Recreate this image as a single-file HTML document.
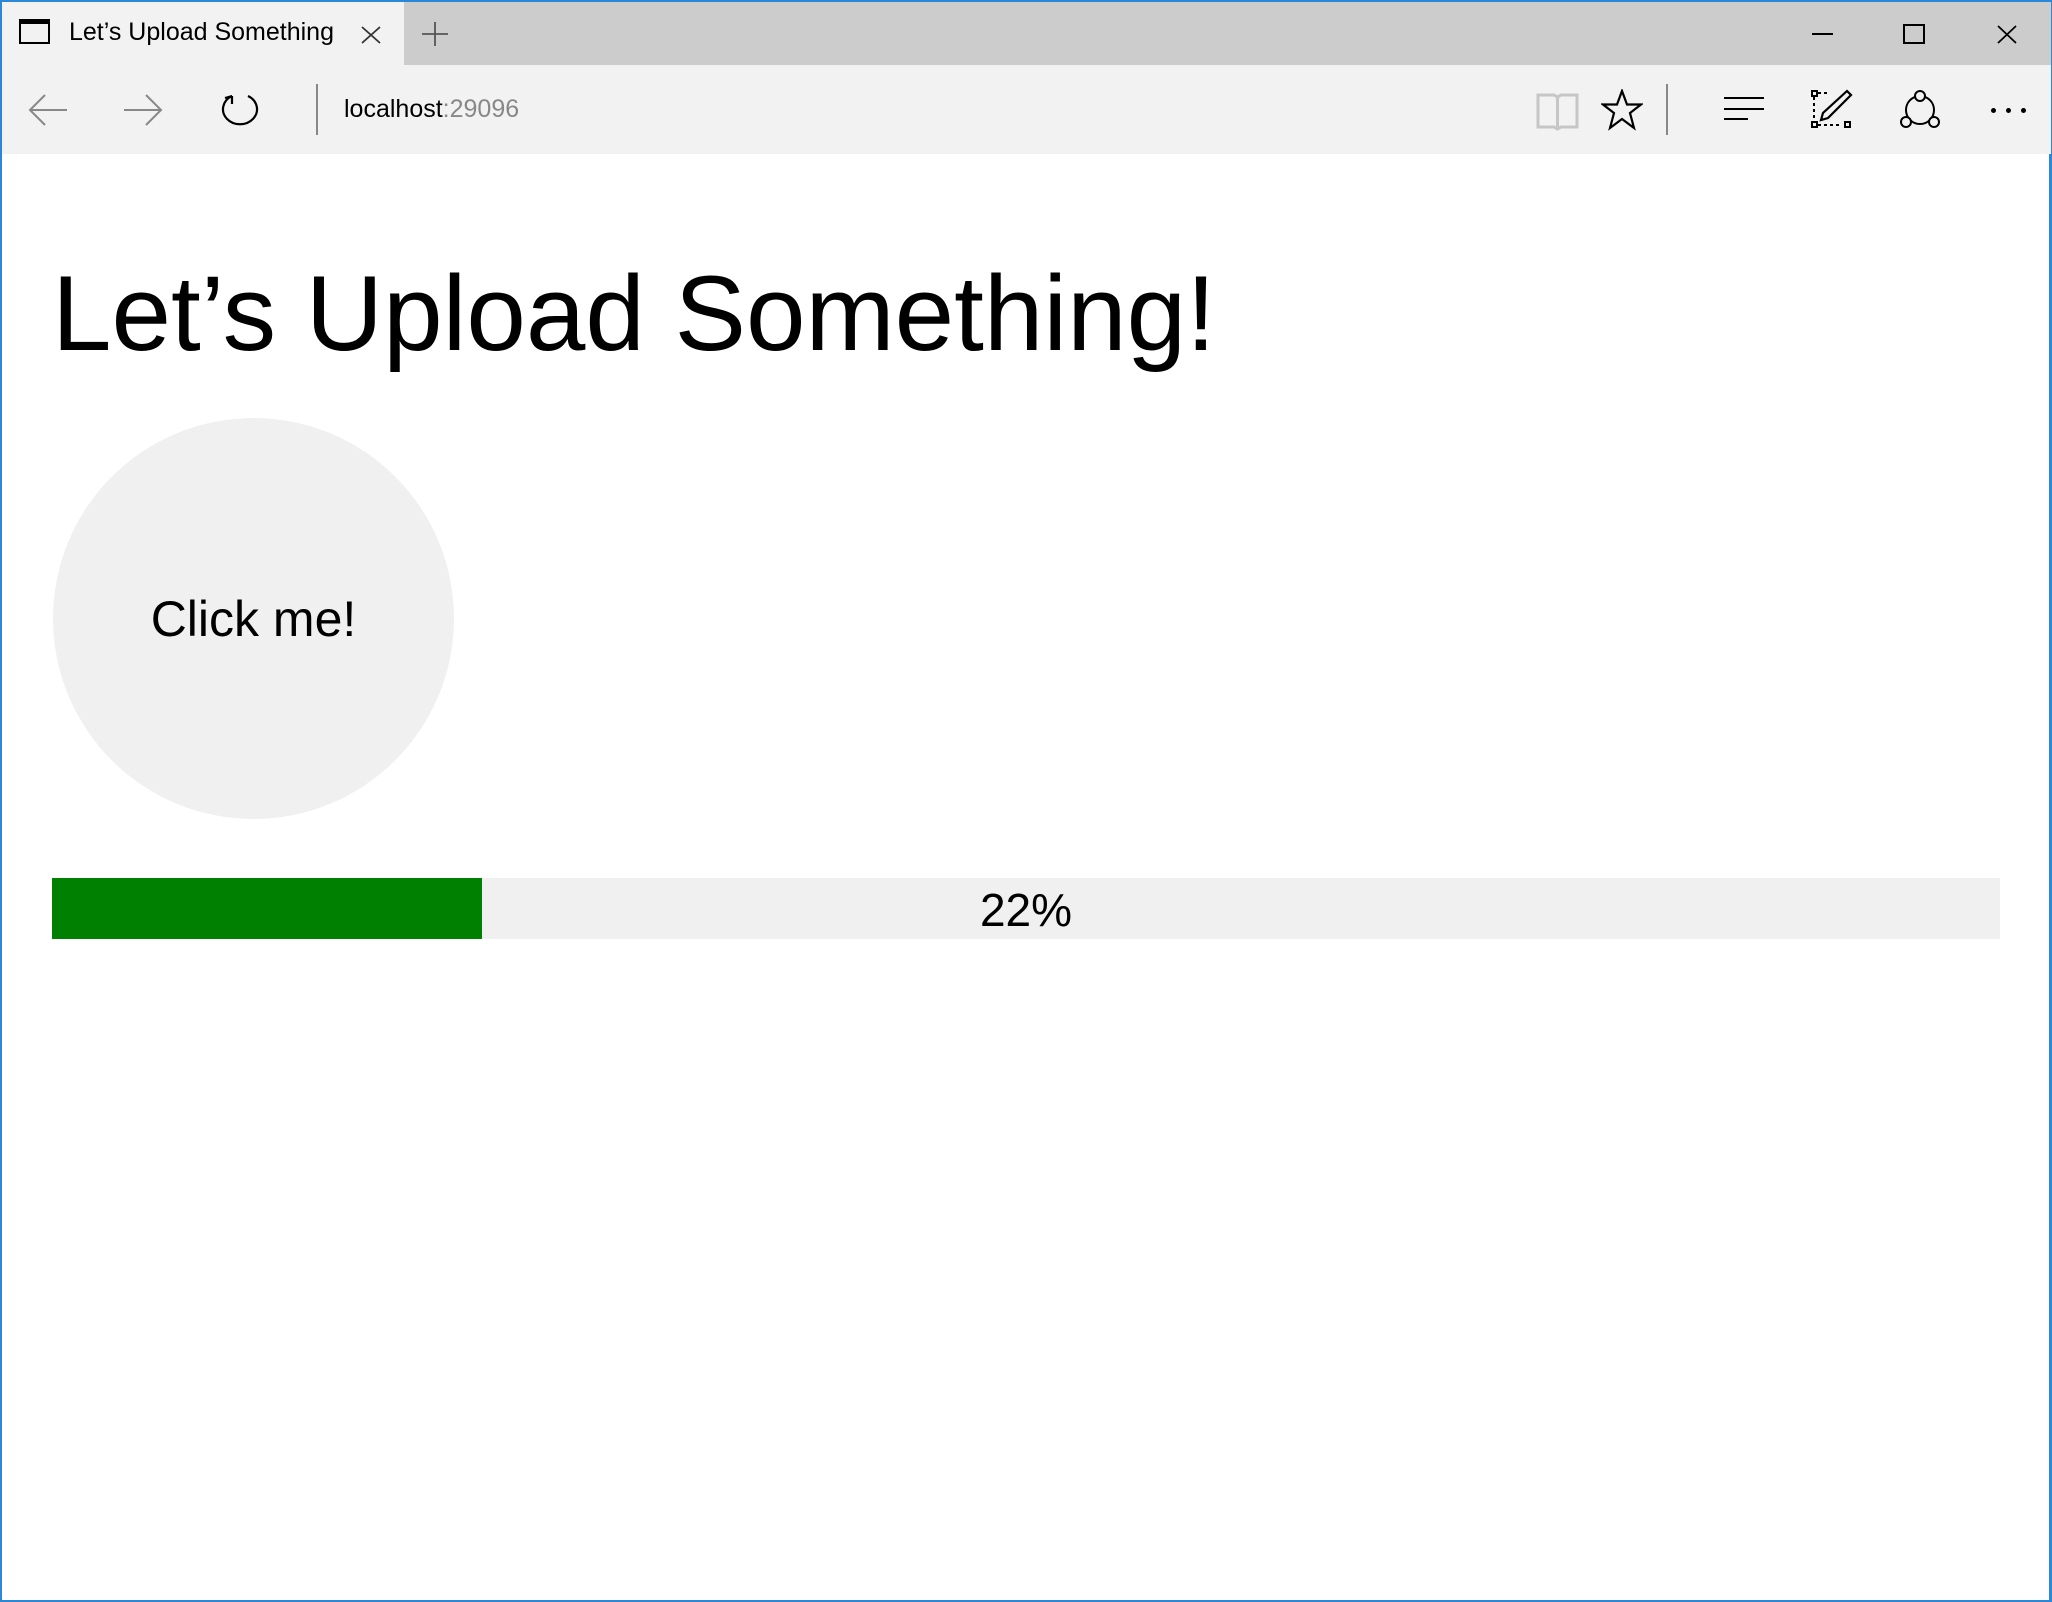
<!DOCTYPE html>
<html><head><meta charset="utf-8"><style>
*{margin:0;padding:0;box-sizing:border-box}
body{width:2052px;height:1602px;overflow:hidden;background:#fff;font-family:"Liberation Sans",sans-serif;position:relative}
.win{position:absolute;left:0;top:0;width:2052px;height:1602px;border:2px solid #2b88d8;border-right-width:3px}
.tabbar{position:absolute;left:0;top:0;width:2049px;height:63px;background:#cccccc}
.tab{position:absolute;left:0;top:0;width:402px;height:63px;background:#f2f2f2}
.toolbar{position:absolute;left:0;top:63px;width:2049px;height:89px;background:#f2f2f2}
.abs{position:absolute}
</style></head><body>
<div class="win">
<div class="tabbar">
 <div class="tab">
  <div class="abs" style="left:17px;top:17px;width:31px;height:25px;border:2px solid #000;border-top-width:5px"></div>
  <div class="abs" style="left:67px;top:16px;font-size:25px;color:#000;white-space:nowrap;width:278px;overflow:hidden">Let’s Upload Something</div>
  <svg class="abs" style="left:359px;top:24px" width="20" height="18"><path d="M1 1L19 17M19 1L1 17" stroke="#333" stroke-width="1.8"/></svg>
 </div>
 <svg class="abs" style="left:420px;top:20px" width="26" height="24"><path d="M13 0V24M0 12H26" stroke="#555" stroke-width="1.8"/></svg>
 <div class="abs" style="left:1810px;top:31px;width:21px;height:2px;background:#000"></div>
 <div class="abs" style="left:1901px;top:22px;width:22px;height:20px;border:2px solid #000"></div>
 <svg class="abs" style="left:1995px;top:23px" width="20" height="19"><path d="M1 1L19 18M19 1L1 18" stroke="#000" stroke-width="1.8"/></svg>
</div>
<div class="toolbar">
 <svg class="abs" style="left:26px;top:28px" width="40" height="34"><path d="M39 17H2M17 2L2 17L17 32" fill="none" stroke="#888" stroke-width="2"/></svg>
 <svg class="abs" style="left:121px;top:28px" width="40" height="34"><path d="M1 17H38M23 2L38 17L23 32" fill="none" stroke="#888" stroke-width="2"/></svg>
 <svg class="abs" style="left:218px;top:25px" width="40" height="40"><path d="M12 6A17 15 0 1 0 28 6M12 6V14M12 6L5 8" fill="none" stroke="#000" stroke-width="2.2"/></svg>
 <div class="abs" style="left:314px;top:19px;width:2px;height:51px;background:#888"></div>
 <div class="abs" style="left:342px;top:30px;font-size:25px;color:#000">localhost<span style="color:#888">:29096</span></div>
 <svg class="abs" style="left:1534px;top:26px" width="43" height="40"><path d="M2 4H18L21.5 6L25 4H41V36H25L21.5 38L18 36H2Z M21.5 6V36" fill="none" stroke="#c6c6c6" stroke-width="3"/></svg>
 <svg class="abs" style="left:1599px;top:24px" width="42" height="42"><path d="M21 2L26 15.5L40 15.5L29 24L33 39L21 30L9 39L13 24L2 15.5L16 15.5Z" fill="none" stroke="#000" stroke-width="2.2"/></svg>
 <div class="abs" style="left:1664px;top:19px;width:2px;height:51px;background:#888"></div>
 <div class="abs" style="left:1722px;top:32px;width:40px;height:2px;background:#000"></div>
 <div class="abs" style="left:1722px;top:43px;width:40px;height:2px;background:#000"></div>
 <div class="abs" style="left:1722px;top:53px;width:24px;height:2px;background:#000"></div>
 <svg class="abs" style="left:1808px;top:24px" width="44" height="40"><path d="M4 8V32 M8 36H32 M8 4H20" fill="none" stroke="#000" stroke-width="2" stroke-dasharray="3 3"/><rect x="2" y="2" width="5" height="5" fill="none" stroke="#000" stroke-width="2"/><rect x="2" y="33" width="5" height="5" fill="none" stroke="#000" stroke-width="2"/><rect x="35" y="33" width="5" height="5" fill="none" stroke="#000" stroke-width="2"/><path d="M37 2L41 6L18 29L11 31L13 24Z" fill="none" stroke="#000" stroke-width="2.2"/></svg>
 <svg class="abs" style="left:1896px;top:24px" width="44" height="42"><circle cx="22" cy="21" r="14" fill="none" stroke="#000" stroke-width="2"/><circle cx="22" cy="7" r="5" fill="#f2f2f2" stroke="#000" stroke-width="2"/><circle cx="8" cy="33" r="5" fill="#f2f2f2" stroke="#000" stroke-width="2"/><circle cx="36" cy="33" r="5" fill="#f2f2f2" stroke="#000" stroke-width="2"/></svg>
 <div class="abs" style="left:1989px;top:43px;width:5px;height:5px;background:#000;border-radius:3px;box-shadow:15px 0 #000,30px 0 #000"></div>
</div>
<div class="abs" style="left:50px;top:241px;font-size:107px;line-height:140px;color:#000;white-space:nowrap">Let’s Upload Something!</div>
<div class="abs" style="left:51px;top:416px;width:401px;height:401px;border-radius:50%;background:#f0f0f0;display:flex;align-items:center;justify-content:center;font-size:50px;color:#000">Click me!</div>
<div class="abs" style="left:50px;top:876px;width:1948px;height:61px;background:#f0f0f0"></div>
<div class="abs" style="left:50px;top:876px;width:430px;height:61px;background:#008000"></div>
<div class="abs" style="left:50px;top:876px;width:1948px;height:61px;line-height:64px;text-align:center;font-size:46px;color:#000">22%</div>
</div>
</body></html>
